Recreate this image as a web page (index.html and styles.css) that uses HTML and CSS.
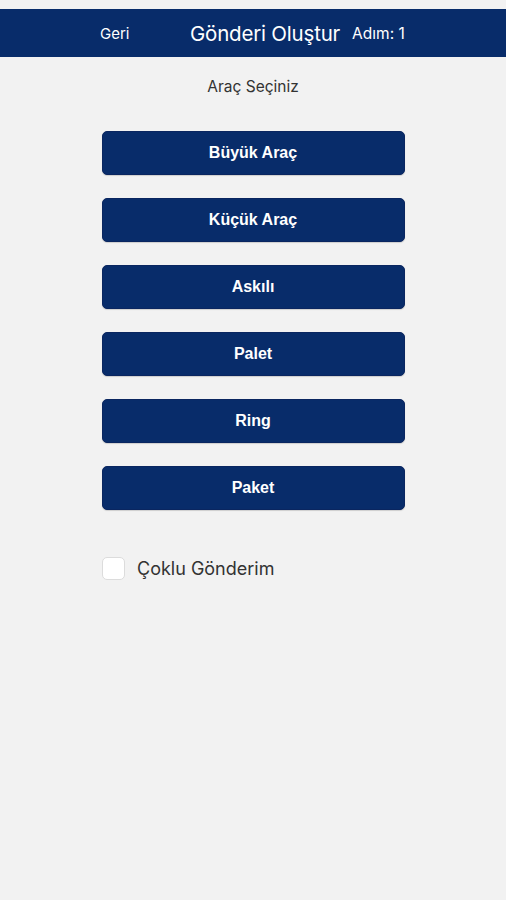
FILE: index.html
```html
<!DOCTYPE html>
<html lang="tr">
<head>
<meta charset="utf-8">
<link rel="stylesheet" href="styles.css">
</head>
<body>
<div class="top-gap"></div>
<header class="nav">
  <span class="nav-back">Geri</span>
  <span class="nav-title">Gönderi Oluştur</span>
  <span class="nav-step">Adım: 1</span>
</header>
<main class="content">
  <p class="subtitle">Araç Seçiniz</p>
  <div class="buttons">
    <button class="btn">Büyük Araç</button>
    <button class="btn">Küçük Araç</button>
    <button class="btn">Askılı</button>
    <button class="btn">Palet</button>
    <button class="btn">Ring</button>
    <button class="btn">Paket</button>
  </div>
  <label class="check-row">
    <span class="checkbox"></span>
    <span class="check-label">Çoklu Gönderim</span>
  </label>
</main>
</body>
</html>
```
FILE: styles.css
```css
* { box-sizing: border-box; }
html, body {
  margin: 0;
  padding: 0;
  background: #f2f2f2;
  font-family: Inter, "Liberation Sans", sans-serif;
  height: 900px;
  overflow: hidden;
}
.top-gap { height: 9px; }
.nav {
  height: 48px;
  background: #082c6a;
  display: flex;
  align-items: center;
  padding-left: 100px;
  color: #fff;
}
.nav-back {
  font-size: 15px;
  width: 90px;
}
.nav-title {
  font-size: 20.5px;
  letter-spacing: -0.2px;
}
.nav-step {
  font-size: 15.5px;
  margin-left: 12px;
}
.content {
  display: flex;
  flex-direction: column;
  align-items: center;
}
.subtitle {
  margin: 20px 0 0;
  font-size: 15.5px;
  color: #333;
  line-height: 20px;
}
.buttons {
  margin-top: 34px;
  display: flex;
  flex-direction: column;
  gap: 23px;
}
.btn {
  width: 303px;
  height: 44px;
  border: 1px solid #0a2660;
  border-radius: 5px;
  background: #082c6a;
  color: #fff;
  font-family: "Liberation Sans", Arial, sans-serif;
  font-weight: bold;
  font-size: 16px;
  box-shadow: 0 1px 1px rgba(0,0,0,0.15);
  padding: 0;
}
.check-row {
  align-self: flex-start;
  margin-left: 102px;
  margin-top: 47px;
  display: flex;
  align-items: center;
  gap: 12px;
}
.checkbox {
  width: 23px;
  height: 23px;
  border: 1px solid #dcdcdc;
  border-radius: 5px;
  background: #fff;
}
.check-label {
  font-size: 18px;
  color: #333;
}
```
